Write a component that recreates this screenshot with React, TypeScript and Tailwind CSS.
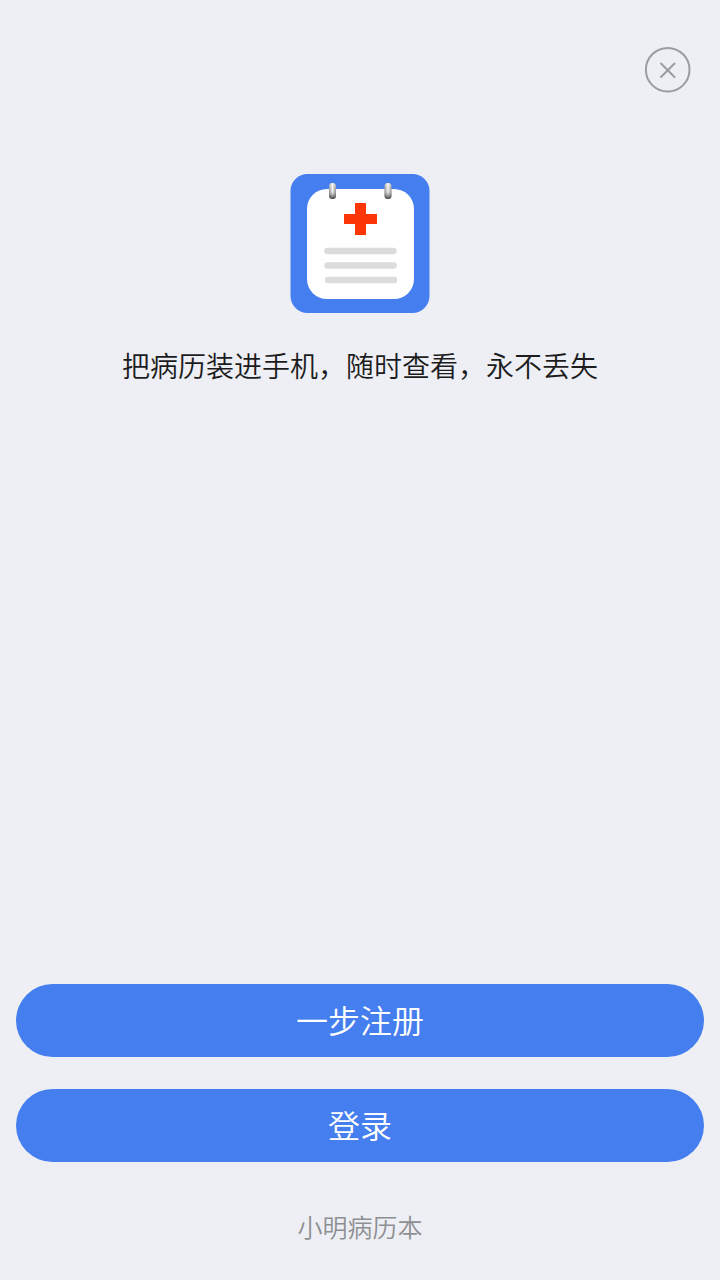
function Ring({ x }: { x: number }) {
  return (
    <g>
      <rect x={x} y="9" width="7" height="16" rx="3.5" fill="url(#ring)" />
      <rect x={x} y="9" width="7" height="16" rx="3.5" fill="url(#ringShade)" />
    </g>
  );
}

function Logo() {
  return (
    <svg viewBox="0 0 140 140" className="size-[140px]" role="img" aria-label="小明病历本">
      <defs>
        <linearGradient id="ring" x1="0" x2="1" y1="0" y2="0">
          <stop offset="0" stopColor="#858585" />
          <stop offset="0.5" stopColor="#fff" />
          <stop offset="1" stopColor="#858585" />
        </linearGradient>
        <linearGradient id="ringShade" x1="0" x2="0" y1="0" y2="1">
          <stop offset="0" stopColor="#fff" stopOpacity="0.5" />
          <stop offset="0.5" stopColor="#bbb" stopOpacity="0.2" />
          <stop offset="1" stopColor="#222" stopOpacity="0.9" />
        </linearGradient>
      </defs>
      <rect x="0.5" y="0" width="139" height="139" rx="17" fill="#457eee" />
      <rect x="17" y="15" width="107" height="110" rx="20" fill="#fff" />
      <Ring x={39} />
      <Ring x={94.5} />
      <path d="M65 29h11v11h11v10h-11v11h-11v-11h-11v-10h11z" fill="#fc3606" />
      <path d="M37.500 77h66M37.500 91.500h66M38 106h66" stroke="#dcdcdc" strokeWidth="6.500" strokeLinecap="round" />
    </svg>
  );
}

export default function App() {
  return (
    <main className="flex min-h-screen flex-col items-center bg-[#eeeff5] px-4 font-['Noto_Sans_CJK_SC',sans-serif] font-[350]">
      <header className="flex w-full justify-end px-3 pt-[46px]">
        <button type="button" aria-label="关闭" className="text-[#9b9ca0]">
          <svg viewBox="0 0 48 48" className="size-12" fill="none" stroke="currentColor" strokeWidth="2">
            <circle cx="23.700" cy="23.700" r="21.800" />
            <path d="M17 17.500l13.500 13.500M30.500 17.500l-13.500 13.500" strokeLinecap="round" />
          </svg>
        </button>
      </header>
      <section className="flex flex-col items-center pt-20">
        <Logo />
        <h1 className="pt-[31px] text-[28px] leading-10 font-[350] text-[#1c1c1c]">把病历装进手机，随时查看，永不丢失</h1>
      </section>
      <div className="mt-auto flex w-full flex-col gap-8">
        <button type="button" className="h-[73px] w-full rounded-full bg-[#457eee] pb-1 text-[32px] text-white">一步注册</button>
        <button type="button" className="h-[73px] w-full rounded-full bg-[#457eee] pb-1 text-[32px] text-white">登录</button>
      </div>
      <footer className="pt-[46px] pb-9 text-[25px] leading-9 text-[#8e8f93]">小明病历本</footer>
    </main>
  );
}
